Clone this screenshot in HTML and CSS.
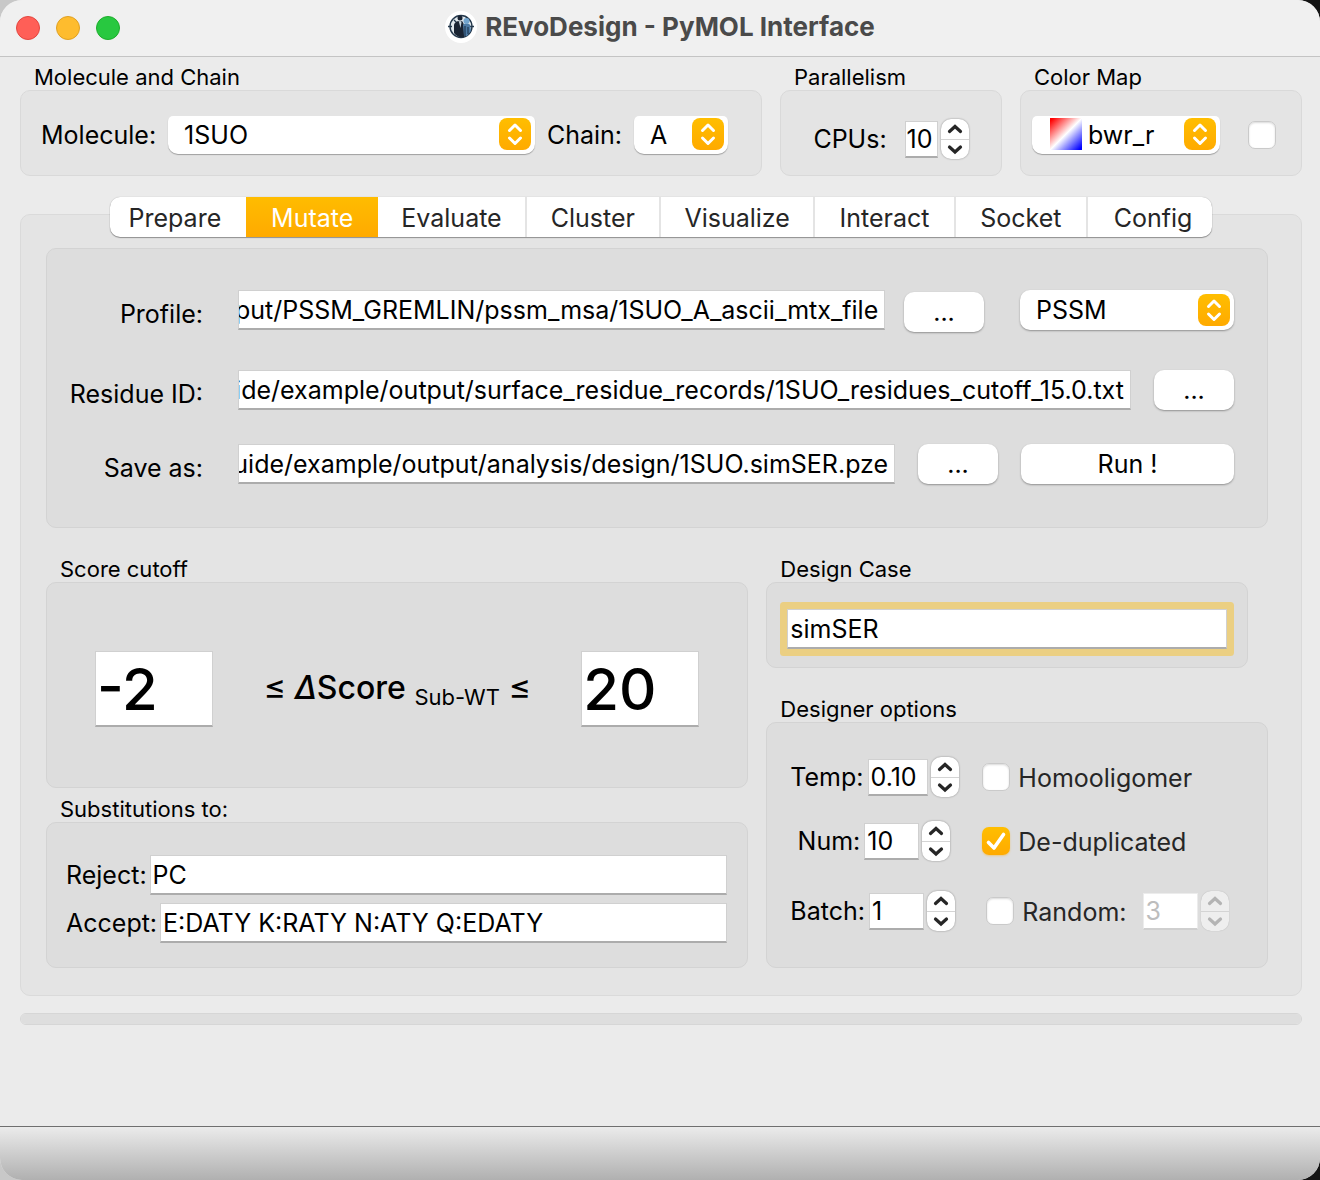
FILE: index.html
```html
<!DOCTYPE html>
<html lang="en">

<head>
    <meta charset="UTF-8">
    <title>REvoDesign - PyMOL Interface</title>
    <link rel="stylesheet" href="styles.css">
</head>

<body>
    <!-- shared icons -->
    <svg class="sprite" aria-hidden="true">
        <defs>
            <linearGradient id="amber" x1="0" y1="0" x2="0" y2="1">
                <stop offset="0" stop-color="#ffbe00" />
                <stop offset="1" stop-color="#ffaa00" />
            </linearGradient>
        </defs>
        <symbol id="arrows" viewBox="0 0 32 32">
            <rect width="32" height="32" rx="8" fill="url(#amber)" />
            <path d="M10.500 12.500L16 7L21.500 12.500M10.500 20L16 25.500L21.500 20" fill="none" stroke="#fff" stroke-width="3" stroke-linecap="round" stroke-linejoin="round" />
        </symbol>
        <symbol id="up" viewBox="0 0 28 20">
            <path d="M8.500 12.500L14 7.500L19.500 12.500" fill="none" stroke="currentColor" stroke-width="3.200" stroke-linecap="round" stroke-linejoin="miter" />
        </symbol>
        <symbol id="down" viewBox="0 0 28 20">
            <path d="M8.500 7L14 12L19.500 7" fill="none" stroke="currentColor" stroke-width="3.200" stroke-linecap="round" stroke-linejoin="miter" />
        </symbol>
    </svg>

    <div class="window">
        <header class="titlebar">
            <div class="lights">
                <button class="light close" type="button" aria-label="Close"></button>
                <button class="light minimize" type="button" aria-label="Minimize"></button>
                <button class="light zoom" type="button" aria-label="Zoom"></button>
            </div>
            <svg class="logo" viewBox="0 0 32 32" aria-hidden="true">
                <circle cx="16" cy="16" r="16" fill="#fff" />
                <circle cx="16" cy="15.500" r="11" fill="#dfe7ec" stroke="#24384c" stroke-width="1.400" />
                <path d="M3 15.500h4M25 15.500h4M9 9l3 3M21 6l2 3" stroke="#24384c" stroke-width="1.300" />
                <path d="M9 22V14c0-2 2-3 4-4l2 1 2-1c1 1 2 3 2 5v11c-4 1-8-1-10-4z" fill="#1a2433" />
                <circle cx="15" cy="7" r="2.500" fill="#1a2433" />
                <path d="M14 11l1.500 6 1-6z" fill="#c9d6de" />
                <path d="M18 14c1-2 6-2 7 0l1 6-4 5h-3z" fill="#4d7ba5" />
                <circle cx="21.500" cy="10" r="3" fill="#72a5ce" />
                <path d="M20 15v10M23 16v7" fill="none" stroke="#1f3753" stroke-width="1.200" />
            </svg>
            <h1>REvoDesign - PyMOL Interface</h1>
        </header>

        <main class="content">
            <div class="top-row">
                <section class="group">
                    <h2>Molecule and Chain</h2>
                    <div class="box molecule-box">
                        <label for="molecule">Molecule:</label>
                        <div class="select clipped molecule-select">
                            <select id="molecule">
                                <option>1SUO</option>
                            </select>
                            <svg class="arrows"><use href="#arrows" /></svg>
                        </div>
                        <label for="chain">Chain:</label>
                        <div class="select clipped chain-select">
                            <select id="chain">
                                <option>A</option>
                            </select>
                            <svg class="arrows"><use href="#arrows" /></svg>
                        </div>
                    </div>
                </section>

                <section class="group">
                    <h2>Parallelism</h2>
                    <div class="box cpu-box">
                        <label for="cpus">CPUs:</label>
                        <div class="spin spin-tight">
                            <input id="cpus" type="number" value="10">
                            <div class="stepper">
                                <button type="button" aria-label="More CPUs"><svg><use href="#up" /></svg></button>
                                <button type="button" aria-label="Fewer CPUs"><svg><use href="#down" /></svg></button>
                            </div>
                        </div>
                    </div>
                </section>

                <section class="group">
                    <h2>Color Map</h2>
                    <div class="box color-box">
                        <div class="select clipped color-select">
                            <select id="cmap" aria-label="Color map">
                                <option>bwr_r</option>
                            </select>
                            <span class="swatch"></span>
                            <svg class="arrows"><use href="#arrows" /></svg>
                        </div>
                        <input type="checkbox" aria-label="Reverse color map">
                    </div>
                </section>
            </div>

            <nav class="tabs">
                <button type="button">Prepare</button>
                <button type="button" class="active">Mutate</button>
                <button type="button">Evaluate</button>
                <button type="button">Cluster</button>
                <button type="button">Visualize</button>
                <button type="button">Interact</button>
                <button type="button">Socket</button>
                <button type="button">Config</button>
            </nav>

            <div class="panel">
                <form class="box files">
                    <div class="file-row">
                        <label for="profile">Profile:</label>
                        <input class="path" id="profile" type="text" value="output/PSSM_GREMLIN/pssm_msa/1SUO_A_ascii_mtx_file">
                        <button class="btn browse near" type="button">...</button>
                        <div class="select profile-type">
                            <select aria-label="Profile type">
                                <option>PSSM</option>
                            </select>
                            <svg class="arrows"><use href="#arrows" /></svg>
                        </div>
                    </div>
                    <div class="file-row">
                        <label for="residue">Residue ID:</label>
                        <input class="path" id="residue" type="text" value="guide/example/output/surface_residue_records/1SUO_residues_cutoff_15.0.txt">
                        <button class="btn browse" type="button">...</button>
                    </div>
                    <div class="file-row">
                        <label for="save">Save as:</label>
                        <input class="path" id="save" type="text" value="guide/example/output/analysis/design/1SUO.simSER.pze">
                        <button class="btn browse" type="button">...</button>
                        <button class="btn run" type="button">Run !</button>
                    </div>
                </form>

                <div class="columns">
                    <div class="column">
                        <section class="group">
                            <h2>Score cutoff</h2>
                            <div class="box score-box">
                                <input class="score" type="text" value="-2" aria-label="Minimum score">
                                <p class="formula"><span class="le">≤</span> <i>Δ</i>Score <span class="sub">Sub-WT</span> <span class="le">≤</span></p>
                                <input class="score" type="text" value="20" aria-label="Maximum score">
                            </div>
                        </section>
                        <section class="group">
                            <h2>Substitutions to:</h2>
                            <div class="box subst-box">
                                <div class="subst-row">
                                    <label for="reject">Reject:</label>
                                    <input id="reject" type="text" value="PC">
                                </div>
                                <div class="subst-row">
                                    <label for="accept">Accept:</label>
                                    <input id="accept" type="text" value="E:DATY K:RATY N:ATY Q:EDATY">
                                </div>
                            </div>
                        </section>
                    </div>

                    <div class="column">
                        <section class="group design-case">
                            <h2>Design Case</h2>
                            <div class="box case-box">
                                <input class="focused" type="text" value="simSER" aria-label="Design case">
                            </div>
                        </section>
                        <section class="group">
                            <h2>Designer options</h2>
                            <div class="box options-box">
                                <div class="option-row">
                                    <div class="option">
                                        <label for="temp">Temp:</label>
                                        <div class="spin spin-wide">
                                            <input id="temp" type="number" step="0.01" value="0.10">
                                            <div class="stepper">
                                                <button type="button" aria-label="Raise temp"><svg><use href="#up" /></svg></button>
                                                <button type="button" aria-label="Lower temp"><svg><use href="#down" /></svg></button>
                                            </div>
                                        </div>
                                    </div>
                                    <input id="homo" type="checkbox">
                                    <label class="check-label" for="homo">Homooligomer</label>
                                </div>
                                <div class="option-row">
                                    <div class="option">
                                        <label for="num">Num:</label>
                                        <div class="spin">
                                            <input id="num" type="number" value="10">
                                            <div class="stepper">
                                                <button type="button" aria-label="More designs"><svg><use href="#up" /></svg></button>
                                                <button type="button" aria-label="Fewer designs"><svg><use href="#down" /></svg></button>
                                            </div>
                                        </div>
                                    </div>
                                    <input id="dedup" type="checkbox" checked>
                                    <label class="check-label" for="dedup">De-duplicated</label>
                                </div>
                                <div class="option-row last">
                                    <div class="option">
                                        <label for="batch">Batch:</label>
                                        <div class="spin">
                                            <input id="batch" type="number" value="1">
                                            <div class="stepper">
                                                <button type="button" aria-label="Larger batch"><svg><use href="#up" /></svg></button>
                                                <button type="button" aria-label="Smaller batch"><svg><use href="#down" /></svg></button>
                                            </div>
                                        </div>
                                    </div>
                                    <input id="random" type="checkbox">
                                    <label class="check-label" for="random">Random:</label>
                                    <div class="spin disabled">
                                        <input type="number" value="3" aria-label="Random seed" disabled>
                                        <div class="stepper">
                                            <button type="button" aria-label="Raise seed" disabled><svg><use href="#up" /></svg></button>
                                            <button type="button" aria-label="Lower seed" disabled><svg><use href="#down" /></svg></button>
                                        </div>
                                    </div>
                                </div>
                            </div>
                        </section>
                    </div>
                </div>
            </div>

            <progress value="0" max="100" aria-label="Progress"></progress>
        </main>

        <footer class="statusbar"></footer>
    </div>

    <script>
        // long paths: show the file name end
        document.querySelectorAll(".path").forEach((input) => {
            input.scrollLeft = input.scrollWidth;
        });
    </script>
</body>

</html>
```
FILE: styles.css
```css
* {
    box-sizing: border-box;
}

body {
    margin: 0;
    font-family: Inter, "Liberation Sans", sans-serif;
    font-size: 25px;
    line-height: 32px;
    color: #000;
    background: linear-gradient(to right, #c8c8c8 50%, #141414 50%);
}

input,
select,
button {
    font: inherit;
    color: inherit;
    margin: 0;
}

h1,
h2,
p {
    margin: 0;
}

.sprite {
    position: absolute;
    width: 0;
    height: 0;
}

.window {
    display: flex;
    flex-direction: column;
    min-height: 100vh;
    background: #ebebeb;
    border-radius: 22px;
    overflow: hidden;
}

/* title bar */
.titlebar {
    display: flex;
    align-items: center;
    justify-content: center;
    gap: 8px;
    height: 57px;
    padding-bottom: 3px;
    background: #f0f0f0;
    border-bottom: 1px solid #c4c4c4;
    position: relative;
}

.titlebar h1 {
    font-size: 26px;
    font-weight: 700;
    color: #4a4a4a;
}

.lights {
    position: absolute;
    left: 16px;
    top: 16px;
    display: flex;
    gap: 16px;
}

.light {
    width: 24px;
    height: 24px;
    padding: 0;
    border-radius: 50%;
    border: 1px solid #e2463f;
    background: #ff5f57;
}

.minimize {
    background: #febc2e;
    border-color: #dfa023;
}

.zoom {
    background: #28c840;
    border-color: #1dad2b;
}

.logo {
    width: 32px;
    height: 32px;
}

/* groups */
.content {
    flex: 1;
    padding: 0 18px 0 20px;
}

.group {
    display: flex;
    flex-direction: column;
}

.group h2 {
    padding: 0 14px;
    font-size: 22px;
    font-weight: 400;
    line-height: 26px;
}

.box {
    border: 1px solid #d9d9d9;
    border-radius: 10px;
    background: #e4e4e4;
}

.top-row {
    display: grid;
    grid-template-columns: 1fr 222px 282px;
    gap: 18px;
    padding-top: 7px;
}

.top-row .box {
    display: flex;
    align-items: center;
    height: 86px;
    padding: 4px 20px 0;
}

.molecule-box {
    gap: 12px;
}

.top-row .cpu-box {
    justify-content: center;
    gap: 18px;
    padding-top: 12px;
}

.top-row .color-box {
    justify-content: space-between;
    padding: 4px 25px 0 11px;
}

/* drop-downs */
.select {
    position: relative;
}

.select select {
    appearance: none;
    display: block;
    width: 100%;
    height: 40px;
    padding: 0 44px 0 16px;
    border: none;
    border-radius: 10px;
    background: #fff;
    box-shadow: 0 1px 2px rgba(0, 0, 0, 0.35);
}

.select.clipped select {
    height: 38px;
    border-radius: 5px 5px 10px 10px;
    box-shadow: 0 1px 1px rgba(0, 0, 0, 0.3);
}

.arrows {
    position: absolute;
    top: 4px;
    right: 4px;
    width: 32px;
    height: 32px;
    pointer-events: none;
}

.clipped .arrows {
    top: 2px;
}

.molecule-select {
    flex: 1;
}

.chain-select {
    width: 94px;
    margin-right: 13px;
}

.color-select {
    width: 188px;
}

.color-select select {
    padding-left: 56px;
}

.swatch {
    position: absolute;
    left: 18px;
    top: 2px;
    width: 32px;
    height: 32px;
    background: linear-gradient(135deg, #f00 5%, #fff 50%, #00f 95%);
}

/* text fields */
input[type="text"],
input[type="number"] {
    appearance: textfield;
    min-width: 0;
    height: 40px;
    padding: 0 2px;
    border: 1px solid #d0d0d0;
    border-bottom: 2px solid #acacac;
    border-radius: 0;
    background: #fff;
    outline: none;
}

input::-webkit-inner-spin-button {
    appearance: none;
    margin: 0;
}

input[type="checkbox"] {
    appearance: none;
    flex: none;
    width: 28px;
    height: 28px;
    border: 1px solid #cacaca;
    border-radius: 7px;
    background: #fff;
    box-shadow: inset 0 1px 2px rgba(0, 0, 0, 0.15);
}

input[type="checkbox"]:checked {
    border: none;
    background: url("data:image/svg+xml,%3Csvg xmlns='http://www.w3.org/2000/svg' viewBox='0 0 28 28'%3E%3Cpath d='M6.500 15.500L12 21L21.500 7.500' fill='none' stroke='white' stroke-width='3.600' stroke-linecap='round' stroke-linejoin='round'/%3E%3C/svg%3E"), linear-gradient(#ffbe00, #ffaa00);
    box-shadow: 0 1px 2px rgba(255, 170, 0, 0.4);
}

/* spin boxes */
.spin {
    display: flex;
    align-items: center;
    gap: 3px;
}

.spin input[type="number"] {
    width: 55px;
    height: 37px;
}

.spin-wide input[type="number"] {
    width: 60px;
}

.spin-tight input[type="number"] {
    width: 33px;
    padding: 0 1px;
}

.stepper {
    display: flex;
    flex-direction: column;
    width: 28px;
    border-radius: 10px;
    background: #fff;
    box-shadow: 0 0 2px rgba(0, 0, 0, 0.4);
}

.stepper button {
    display: block;
    height: 20px;
    padding: 0;
    border: none;
    background: none;
    color: #262626;
}

.stepper button + button {
    border-top: 1px solid #d4d4d4;
}

.stepper svg {
    display: block;
    width: 28px;
    height: 20px;
}

.disabled .stepper {
    background: #eee;
    box-shadow: 0 0 1px rgba(0, 0, 0, 0.25);
}

.disabled .stepper button {
    color: #b4b4b4;
}

.disabled input[type="number"] {
    border-color: #ececec #ececec #cfcfcf;
    color: #bdbdbd;
}

/* tabs */
.tabs {
    position: relative;
    z-index: 1;
    display: grid;
    grid-template-columns: 136fr 132fr 148fr 134fr 154fr 140fr 132fr 124fr;
    width: 86%;
    margin: 21px auto -23px;
    border-radius: 10px;
    background: #fff;
    box-shadow: 0 1px 1px rgba(0, 0, 0, 0.35), 0 0 1px rgba(0, 0, 0, 0.3);
}

.tabs button {
    height: 40px;
    padding: 2px 0 0;
    border: none;
    border-right: 2px solid #e4e4e4;
    background: none;
    color: #262626;
}

.tabs button:first-child,
.tabs button:last-child {
    border: none;
}

.tabs button:first-child {
    padding-right: 6px;
}

.tabs button:last-child {
    padding-left: 6px;
}

.tabs .active {
    border: none;
    background: linear-gradient(#ffbc00, #ffaa00);
    color: #fff;
}

.panel {
    padding: 33px 33px 27px 25px;
    border: 1px solid #dadada;
    border-radius: 10px;
    background: #e4e4e4;
}

.panel .box {
    border-color: #d3d3d3;
    background: #dddddd;
}

/* input files */
.files {
    display: flex;
    flex-direction: column;
    gap: 34px;
    padding: 39px 33px 43px 0;
}

.file-row {
    display: flex;
    align-items: center;
    gap: 23px;
}

.file-row:first-child {
    margin-bottom: 4px;
}

.file-row label {
    width: 156px;
    margin-right: 12px;
    padding-top: 8px;
    text-align: right;
}

.file-row .path {
    flex: 1;
    padding: 0 6px 0 0;
}

.btn {
    height: 40px;
    padding: 0;
    border: none;
    border-radius: 10px;
    background: #fff;
    box-shadow: 0 1px 2px rgba(0, 0, 0, 0.35);
}

.browse {
    width: 80px;
}

.near {
    margin: 4px 13px 0 -4px;
}

.profile-type {
    width: 214px;
}

.run {
    width: 213px;
}

/* lower columns */
.columns {
    display: grid;
    grid-template-columns: 7fr 5fr;
    gap: 18px;
    padding-top: 28px;
}

.column {
    display: flex;
    flex-direction: column;
}

.score-box {
    display: flex;
    align-items: center;
    justify-content: space-between;
    height: 206px;
    margin-bottom: 8px;
    padding: 8px 48px 0;
}

.score-box .score {
    width: 118px;
    height: 76px;
    padding: 0 1px;
    font-size: 58px;
    font-weight: 500;
}

.formula {
    font-size: 32px;
    font-weight: 500;
    white-space: nowrap;
}

.formula .le {
    font-size: 34px;
    font-weight: 400;
}

.sub {
    position: relative;
    top: 6px;
    font-size: 22px;
    font-weight: 400;
}

.subst-box {
    display: flex;
    flex-direction: column;
    justify-content: center;
    gap: 8px;
    height: 146px;
    padding: 8px 20px 0 19px;
}

.subst-row {
    display: flex;
    align-items: center;
    gap: 3px;
}

.subst-row input {
    flex: 1;
}

.design-case {
    padding-right: 20px;
}

.case-box {
    height: 86px;
    margin-bottom: 28px;
    padding: 26px 20px;
}

.case-box .focused {
    display: block;
    width: 100%;
    box-shadow: 0 0 0 7px #ebcf82;
    border-radius: 1px;
}

.options-box {
    display: flex;
    flex-direction: column;
    gap: 24px;
    height: 246px;
    padding: 34px 23px 0;
}

.option-row {
    display: flex;
    align-items: center;
}

.option {
    display: flex;
    align-items: center;
    gap: 4px;
    width: 192px;
}

.option label {
    min-width: 70px;
    text-align: right;
}

.last {
    margin-top: 6px;
}

.last .option {
    width: 196px;
}

.check-label {
    padding: 2px 0 0 8px;
    color: #262626;
}

.last .disabled {
    margin-left: 16px;
}

progress {
    appearance: none;
    display: block;
    width: 100%;
    height: 12px;
    margin-top: 17px;
    border: 1px solid #d6d6d6;
    border-radius: 6px;
    background: #dedede;
    overflow: hidden;
}

progress::-webkit-progress-bar {
    background: #dedede;
}

.statusbar {
    height: 54px;
    border-top: 1px solid #6f6f6f;
    background: linear-gradient(#ebebeb, #b0b0b0);
}
```
